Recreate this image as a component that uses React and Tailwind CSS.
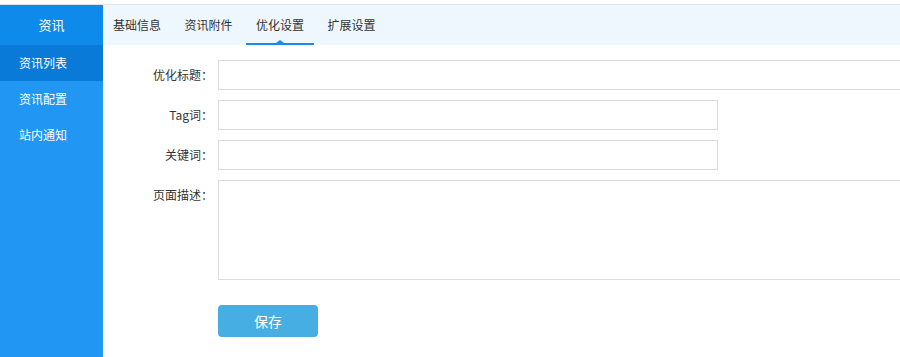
import React from "react";

const menu = ["资讯列表", "资讯配置", "站内通知"];
const tabs = ["基础信息", "资讯附件", "优化设置", "扩展设置"];

const Field = ({ label, children }) => (
  <div className="flex mb-[10px]">
    <label className="w-[110px] shrink-0 text-right h-[30px] leading-[30px] text-[12px] text-[#333]">
      {label}
    </label>
    <div className="ml-[5px]">{children}</div>
  </div>
);

export default function App() {
  return (
    <div
      className="w-[900px] h-[357px] overflow-hidden bg-white flex flex-col"
      style={{ fontFamily: '"Noto Sans CJK SC", "Noto Sans", sans-serif' }}
    >
      <div className="h-[5px] shrink-0 border-b border-[#dfe4ec]" />
      <div className="flex flex-1 min-h-0">
        <aside className="w-[103px] shrink-0 bg-[#2196f3] text-white text-[12px]">
          <div className="h-[40px] bg-[#0d8aea] flex items-center justify-center text-[13px]">资讯</div>
          {menu.map((m, i) => (
            <div
              key={m}
              className={`h-[36px] leading-[36px] pl-[19px] ${i === 0 ? "bg-[#0a7ad9] h-[35px]" : ""}`}
            >
              {m}
            </div>
          ))}
        </aside>

        <main className="flex-1 min-w-0">
          <div className="h-[40px] bg-[#eff7fe] flex gap-[3.5px]">
            {tabs.map((t, i) => (
              <div
                key={t}
                className="relative px-[10px] h-[40px] leading-[39px] text-[12px] text-[#333]"
              >
                {t}
                {i === 2 && (
                  <>
                    <span className="absolute left-0 right-0 bottom-0 h-[2px] bg-[#1a8be6]" />
                    <span className="absolute left-1/2 -translate-x-1/2 bottom-[2px] w-0 h-0 border-l-[4px] border-r-[4px] border-b-[3px] border-l-transparent border-r-transparent border-b-[#1a8be6]" />
                  </>
                )}
              </div>
            ))}
          </div>

          <div className="pt-[15px]">
            <Field label="优化标题：">
              <input className="block w-[700px] h-[30px] border border-[#dcdcdc] outline-none" />
            </Field>
            <Field label="Tag词：">
              <input className="block w-[500px] h-[30px] border border-[#dcdcdc] outline-none" />
            </Field>
            <Field label="关键词：">
              <input className="block w-[500px] h-[30px] border border-[#dcdcdc] outline-none" />
            </Field>
            <Field label="页面描述：">
              <textarea className="block w-[700px] h-[100px] border border-[#dcdcdc] outline-none resize-none" />
            </Field>
            <div className="pl-[115px] pt-[15px]">
              <button className="w-[100px] h-[32px] rounded-[4px] bg-[#46aee3] text-white text-[14px]">
                保存
              </button>
            </div>
          </div>
        </main>
      </div>
    </div>
  );
}
